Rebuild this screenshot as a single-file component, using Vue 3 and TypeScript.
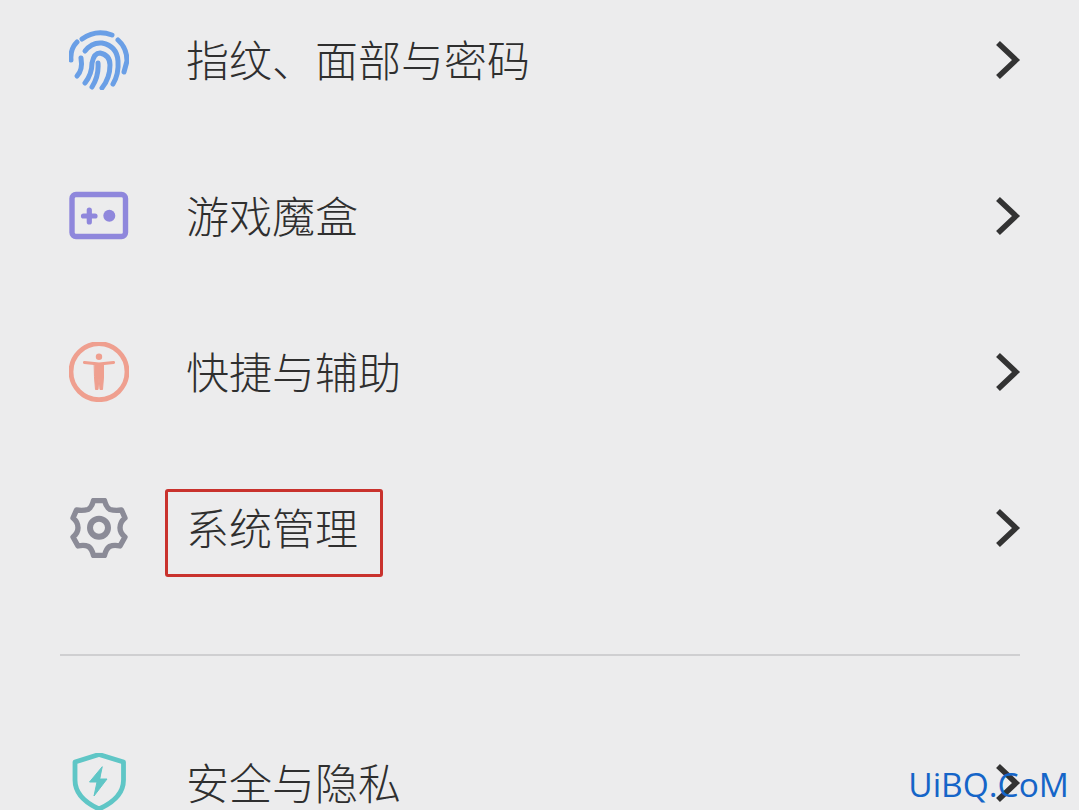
<script setup lang="ts">
interface MenuRow {
  id: string;
  label: string;
  view: string;
  boxed?: boolean;
}

const groupOne: MenuRow[] = [
  { id: 'finger', label: '指纹、面部与密码', view: '19 20 60 60' },
  { id: 'game', label: '游戏魔盒', view: '19 16 60 60' },
  { id: 'access', label: '快捷与辅助', view: '19 17 60 60' },
  { id: 'system', label: '系统管理', view: '19 18 60 60', boxed: true },
];
const groupTwo: MenuRow[] = [{ id: 'shield', label: '安全与隐私', view: '19 23 60 60' }];
const groups = [groupOne, groupTwo];
</script>

<template>
  <div class="page">
    <section v-for="(group, i) in groups" :key="i" class="group">
      <div v-for="row in group" :key="row.id" class="row">
        <svg class="icon" :viewBox="row.view" fill="none" stroke-linecap="round" stroke-linejoin="round">
          <g v-if="row.id === 'finger'" stroke="#6a9fe6" stroke-width="5">
            <path d="M32 29 Q46 19 62 25" />
            <path d="M21 50 Q20 39 27 32" />
            <path d="M68 30 Q77 38 77 51 L74 62" />
            <path d="M35 41 Q42 32 52 33 Q67 36 68 51 Q69 64 63 74" />
            <path d="M31 48 Q33 60 27 66" />
            <path d="M35 73 Q42 64 42 53 Q44 43 50 43 Q60 45 60 55 Q60 68 52 78" />
            <path d="M48 53 Q49 66 42 77" />
          </g>
          <g v-else-if="row.id === 'game'" stroke="#8f87dc">
            <rect x="22" y="24.5" width="53.5" height="42" rx="4" stroke-width="5.4" />
            <path d="M33.5 46 H45 M39.3 40 V52" stroke-width="5.2" />
            <circle cx="59.3" cy="45.7" r="6" fill="#8f87dc" stroke="none" />
          </g>
          <g v-else-if="row.id === 'access'" stroke="#ef9f8f">
            <circle cx="49" cy="46.7" r="28" stroke-width="4.8" />
            <circle cx="49" cy="31.7" r="3.2" fill="#ef9f8f" stroke="none" />
            <path d="M34.5 37.5 L49 39 L63.5 37.5" stroke-width="3.2" />
            <path d="M44.5 39 H53.5 V52 L52.5 64.5 H50 L49 53 L48 64.5 H45.5 L44.5 52 Z" fill="#ef9f8f" stroke-width="1" />
          </g>
          <g v-else-if="row.id === 'system'" stroke="#8b8b97" stroke-width="5.4">
            <path d="M43.5 20.5 H54.5 Q56 27 60 29.5 Q65 31 71.5 30 L75 38 Q70 42 70 47.7 Q70 53 75 57 L70 66 Q64 64.5 59.5 66.5 Q56 69 54.5 75.5 H43.5 Q42 69 38.5 66.5 Q34 64.5 28 66 L23 57 Q28 53 28 47.7 Q28 42 23 38 L26.5 30 Q33 31 38 29.5 Q42 27 43.5 20.5 Z" />
            <circle cx="49" cy="47.7" r="9" stroke-width="6" />
          </g>
          <g v-else stroke="#5fc6c6" stroke-width="4.8">
            <path d="M49 24.5 L25 32 V50 Q25 68 49 79 Q73.5 68 73.5 50 V32 Z" />
            <path d="M52 37 L39.5 52 H47 L44 66 L57 49 H50 Z" fill="#5fc6c6" stroke-width="1" />
          </g>
        </svg>
        <span class="label">
          {{ row.label }}
          <i v-if="row.boxed" class="mark"></i>
        </span>
        <svg class="chevron" width="30" height="44" viewBox="0 0 30 44" fill="none">
          <path d="M5 5 L23 22 L5 39" stroke="#333" stroke-width="5.6" />
        </svg>
      </div>
    </section>
    <div class="watermark">UiBQ.CoM</div>
  </div>
</template>

<style scoped>
.page {
  position: relative;
  width: 1079px;
  height: 810px;
  overflow: hidden;
  background: #ececed;
  font-family: "Noto Sans CJK SC", "Noto Sans", sans-serif;
}
.group {
  margin: 0 59px 0 60px;
}
.group:first-of-type {
  margin-top: -18px;
  padding-bottom: 48px;
  border-bottom: 2px solid #cfcfd1;
}
.group + .group {
  margin-top: 49px;
}
.row {
  display: flex;
  align-items: center;
  height: 156px;
  padding-left: 9px;
}
.icon {
  width: 60px;
  height: 60px;
  flex: none;
}
.label {
  position: relative;
  margin-left: 57px;
  margin-top: -4px;
  font-size: 43px;
  font-weight: 300;
  line-height: 48px;
  color: #2f2f2f;
  white-space: nowrap;
}
.mark {
  position: absolute;
  left: -21px;
  right: -25px;
  top: -13px;
  bottom: -27px;
  border: 3px solid #c9322d;
  border-radius: 3px;
}
.chevron {
  flex: none;
  margin-left: auto;
  margin-right: -3px;
}
.watermark {
  position: absolute;
  right: 10px;
  bottom: 6px;
  font-family: "Open Sans", sans-serif;
  font-size: 33.5px;
  line-height: 40px;
  color: #1565c8;
}
</style>
